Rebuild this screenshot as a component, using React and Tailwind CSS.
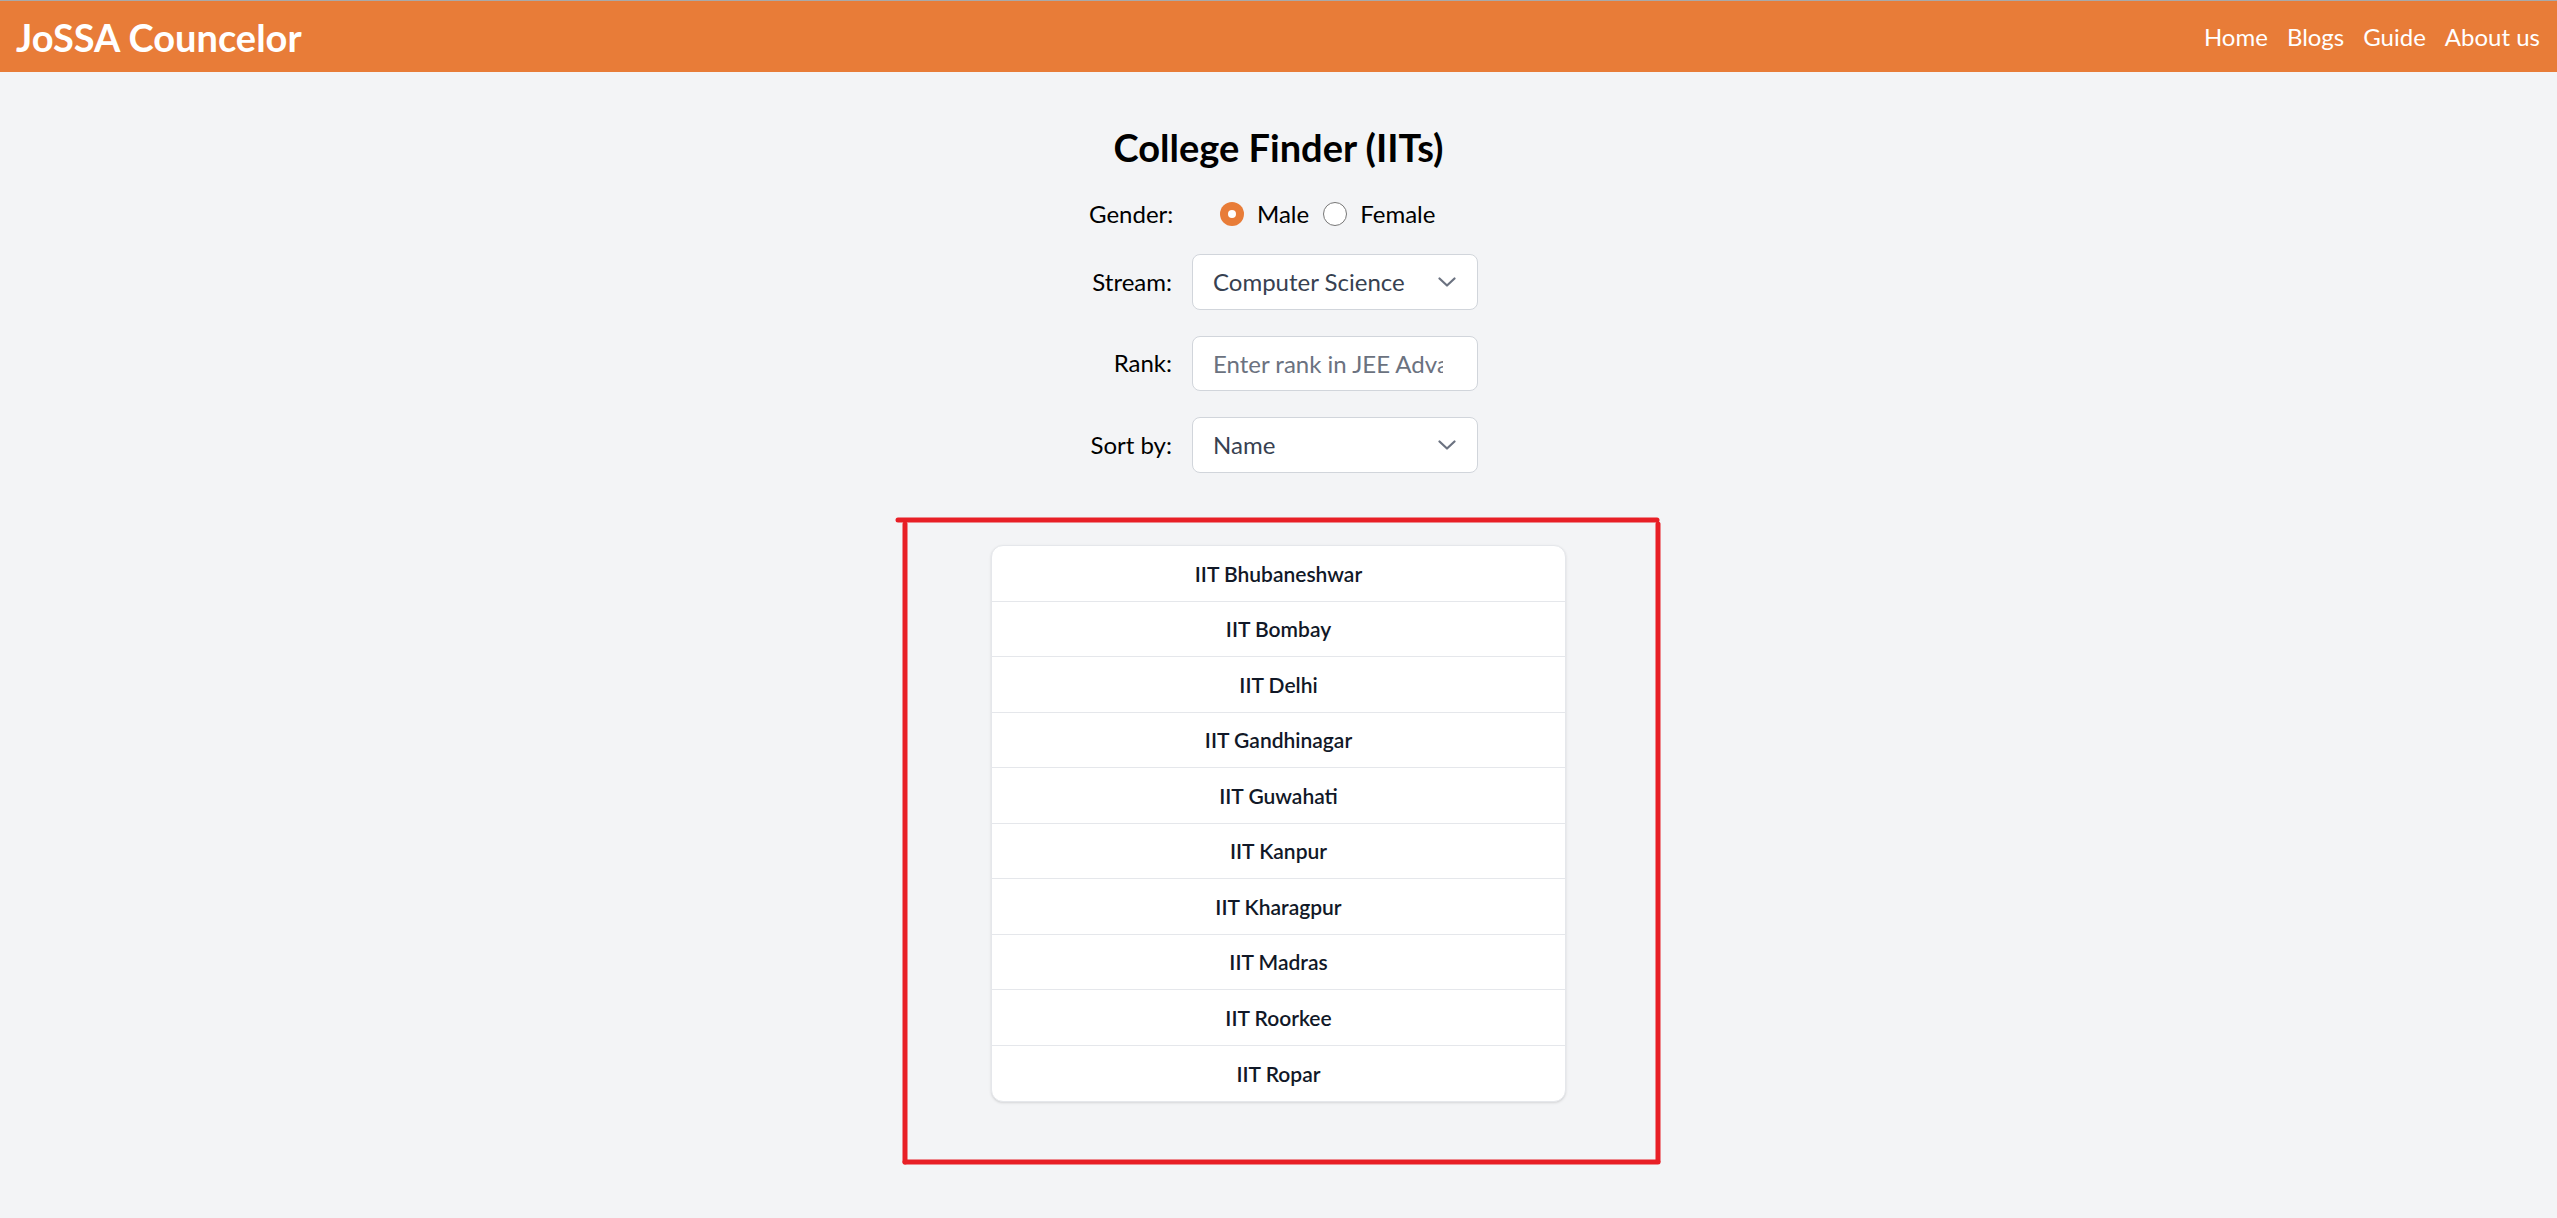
import React from "react";

const colleges = [
  "IIT Bhubaneshwar",
  "IIT Bombay",
  "IIT Delhi",
  "IIT Gandhinagar",
  "IIT Guwahati",
  "IIT Kanpur",
  "IIT Kharagpur",
  "IIT Madras",
  "IIT Roorkee",
  "IIT Ropar",
];

function Chevron() {
  return (
    <svg width="18" height="10" viewBox="0 0 18 10" fill="none" className="shrink-0">
      <path d="M1.5 1.5L9 8.5L16.5 1.5" stroke="#6b7280" strokeWidth="2.2" strokeLinecap="round" strokeLinejoin="round" />
    </svg>
  );
}

function FakeSelect({ value }) {
  return (
    <div className="flex h-[55.5px] w-[286px] items-center justify-between rounded-[8px] border border-[#d1d5db] bg-white pl-[20px] pr-[21px] text-[24px] text-[#374151]">
      <span>{value}</span>
      <Chevron />
    </div>
  );
}

export default function App() {
  return (
    <div className="relative min-h-screen bg-[#f3f4f6] font-[family-name:Lato,sans-serif] text-black">
      <div className="h-px bg-[#a9a9a9]" />
      <nav className="flex h-[71px] items-center justify-between bg-[#e87c38] pl-4 pr-[17px] text-white">
        <span className="text-[38px] font-bold leading-none">JoSSA Councelor</span>
        <div className="flex items-center gap-[19px] text-[24px] leading-none">
          <a>Home</a>
          <a>Blogs</a>
          <a>Guide</a>
          <a>About us</a>
        </div>
      </nav>

      <main className="flex flex-col items-center">
        <h1 className="mt-[51px] text-[38px] font-bold leading-[48px]">College Finder (IITs)</h1>

        <div className="ml-[10px] mt-[29px] grid grid-cols-[83px_286px] items-center gap-x-5 gap-y-[26px] text-[24px]">
          <span className="text-right leading-[28px]">Gender:</span>
          <div className="flex h-[28px] items-center pl-[28px]">
            <span className="flex h-[24px] w-[24px] items-center justify-center rounded-full bg-[#e87c38]">
              <span className="h-[8px] w-[8px] rounded-full bg-white" />
            </span>
            <span className="ml-[13px]">Male</span>
            <span className="ml-[14px] h-[24px] w-[24px] rounded-full border border-[#767676] bg-white" />
            <span className="ml-[13px]">Female</span>
          </div>

          <span className="text-right">Stream:</span>
          <FakeSelect value="Computer Science" />

          <span className="text-right">Rank:</span>
          <input
            type="text"
            placeholder="Enter rank in JEE Advanced"
            className="h-[55.5px] w-[286px] rounded-[8px] border border-[#d1d5db] bg-white pl-[20px] pr-[34px] text-[24px] text-[#374151] outline-none placeholder:text-[#6b7280]"
          />

          <span className="text-right">Sort by:</span>
          <FakeSelect value="Name" />
        </div>

        <div className="mt-[72.5px] w-[575px] overflow-hidden rounded-[12px] border border-[#e5e7eb] bg-white shadow-sm">
          {colleges.map((c, i) => (
            <div
              key={c}
              className={
                "flex h-[55.5px] items-center justify-center text-[21px] font-semibold text-[#111827] " +
                (i < colleges.length - 1 ? "border-b border-[#e5e7eb]" : "")
              }
            >
              {c}
            </div>
          ))}
        </div>
      </main>

      <svg
        className="pointer-events-none absolute left-0 top-0"
        width="2557"
        height="1218"
        viewBox="0 0 2557 1218"
        fill="none"
      >
        <g stroke="#e81f26" strokeWidth="5" strokeLinecap="round">
          <line x1="898" y1="520" x2="1657" y2="520" />
          <line x1="905" y1="524" x2="905" y2="1162" />
          <line x1="1658" y1="524" x2="1658" y2="1161" />
          <line x1="905" y1="1162" x2="1658" y2="1162" />
        </g>
      </svg>
    </div>
  );
}
